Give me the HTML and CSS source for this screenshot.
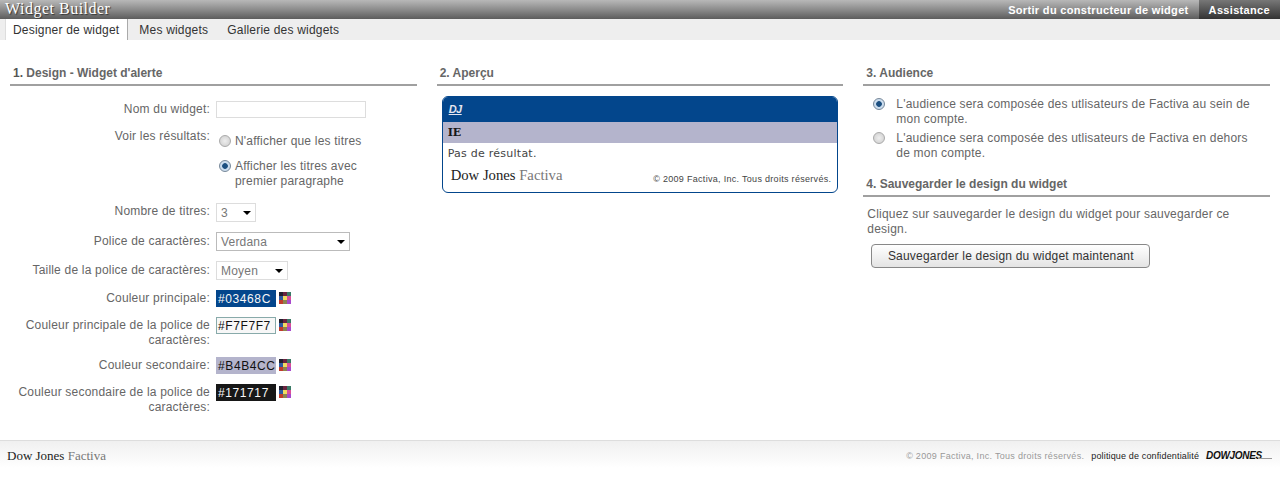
FILE: index.html
```html
<!DOCTYPE html>
<html lang="fr">
<head>
  <meta charset="UTF-8">
  <title>Widget Builder</title>
  <link rel="stylesheet" href="styles.css">
</head>
<body>
  <svg class="sprites" width="0" height="0">
    <symbol id="palette" viewBox="0 0 12 12">
      <rect x="0" y="0" width="4" height="4" fill="#20202e"/>
      <rect x="4" y="0" width="4" height="4" fill="#6a2440"/>
      <rect x="8" y="0" width="4" height="4" fill="#3a7a66"/>
      <rect x="0" y="4" width="4" height="4" fill="#2f5aa0"/>
      <rect x="4" y="4" width="4" height="4" fill="#f0dc60"/>
      <rect x="8" y="4" width="4" height="4" fill="#d84f98"/>
      <rect x="0" y="8" width="4" height="4" fill="#c23c2c"/>
      <rect x="4" y="8" width="4" height="4" fill="#8c8450"/>
      <rect x="8" y="8" width="4" height="4" fill="#a848cc"/>
    </symbol>
  </svg>

  <header class="topbar">
    <div class="brand">Widget Builder</div>
    <nav class="toplinks">
      <a href="#" class="exit">Sortir du constructeur de widget</a>
      <a href="#" class="help">Assistance</a>
    </nav>
  </header>

  <div class="tabs">
    <a href="#" class="tab active">Designer de widget</a>
    <a href="#" class="tab">Mes widgets</a>
    <a href="#" class="tab">Gallerie des widgets</a>
  </div>

  <main class="columns">
    <section class="col">
      <h2><b>1.</b> Design - Widget d'alerte</h2>
      <div class="form">
        <div class="row row-name">
          <label>Nom du widget:</label>
          <input type="text" class="name-input">
        </div>
        <div class="row row-results">
          <label>Voir les résultats:</label>
          <div class="choices">
            <div class="choice"><span class="radio"></span><span>N'afficher que les titres</span></div>
            <div class="choice"><span class="radio on"></span><span>Afficher les titres avec<br>premier paragraphe</span></div>
          </div>
        </div>
        <div class="row row-count">
          <label>Nombre de titres:</label>
          <div class="select s-count">3</div>
        </div>
        <div class="row row-font">
          <label>Police de caractères:</label>
          <div class="select s-font">Verdana</div>
        </div>
        <div class="row row-size">
          <label>Taille de la police de caractères:</label>
          <div class="select s-size">Moyen</div>
        </div>
        <div class="row row-color">
          <label>Couleur principale:</label>
          <div class="swatch c-main">#03468C</div>
          <svg class="palette"><use href="#palette"/></svg>
        </div>
        <div class="row row-color two">
          <label>Couleur principale de la police de caractères:</label>
          <div class="swatch c-main-text">#F7F7F7</div>
          <svg class="palette"><use href="#palette"/></svg>
        </div>
        <div class="row row-color">
          <label>Couleur secondaire:</label>
          <div class="swatch c-second">#B4B4CC</div>
          <svg class="palette"><use href="#palette"/></svg>
        </div>
        <div class="row row-color two">
          <label>Couleur secondaire de la police de caractères:</label>
          <div class="swatch c-second-text">#171717</div>
          <svg class="palette"><use href="#palette"/></svg>
        </div>
      </div>
    </section>

    <section class="col">
      <h2>2. Aperçu</h2>
      <div class="preview">
        <div class="preview-head"><span class="dj">DJ</span></div>
        <div class="preview-title">IE</div>
        <div class="preview-body">Pas de résultat.</div>
        <div class="preview-foot">
          <span class="logo logo-large">Dow Jones <i>Factiva</i></span>
          <span class="preview-copy">© 2009 Factiva, Inc. Tous droits réservés.</span>
        </div>
      </div>
    </section>

    <section class="col">
      <h2>3. Audience</h2>
      <div class="audience">
        <div class="aud-item"><span class="radio on"></span><span>L'audience sera composée des utlisateurs de Factiva au sein de mon compte.</span></div>
        <div class="aud-item"><span class="radio"></span><span>L'audience sera composée des utlisateurs de Factiva en dehors de mon compte.</span></div>
      </div>
      <h2 class="second">4. Sauvegarder le design du widget</h2>
      <p class="save-text">Cliquez sur sauvegarder le design du widget pour sauvegarder ce design.</p>
      <button class="save-btn">Sauvegarder le design du widget maintenant</button>
    </section>
  </main>

  <footer class="footer">
    <span class="logo">Dow Jones <i>Factiva</i></span>
    <div class="footer-right">
      <span class="copy">© 2009 Factiva, Inc. Tous droits réservés.</span>
      <a href="#" class="privacy">politique de confidentialité</a>
      <span class="dowjones">DOWJONES</span>
    </div>
  </footer>
</body>
</html>
```

FILE: styles.css
```css
body {
  margin: 0;
  padding: 0;
  background-color: #fff;
  font-family: "Liberation Sans", Arial, sans-serif;
  font-size: 12px;
  letter-spacing: 0.2px;
  color: #666;
}

a {
  text-decoration: none;
}

.sprites {
  position: absolute;
}

/* top bar */
.topbar {
  height: 19px;
  display: flex;
  justify-content: space-between;
  background: linear-gradient(#b8b8b8, #8c8c8c 50%, #5c5c5c);
}

.brand {
  padding-left: 5px;
  font-family: "Liberation Serif", serif;
  font-size: 16px;
  line-height: 18px;
  letter-spacing: 0.5px;
  color: #fff;
  text-shadow: 1px 1px 1px #333;
}

.toplinks {
  display: flex;
}

.toplinks a {
  font-size: 11px;
  font-weight: bold;
  line-height: 20px;
  letter-spacing: 0.33px;
  color: #fff;
}

.exit {
  padding-right: 10px;
}

.help {
  padding: 0 10px;
  background: linear-gradient(#777, #333);
}

/* tabs */
.tabs {
  height: 21px;
  display: flex;
  padding-left: 5px;
  background-color: #eee;
}

.tab {
  padding: 0 8px 0 11px;
  line-height: 22px;
  color: #333;
}

.tab.active {
  padding: 0 8px 0 7px;
  background-color: #fff;
  border-right: 1px solid #aaa;
  border-left: 1px solid #ddd;
}

/* columns */
.columns {
  height: 400px;
  display: grid;
  grid-template-columns: 1fr 1fr 1fr;
  column-gap: 20px;
  padding: 0 10px;
}

h2 {
  margin: 26px 0 0;
  padding: 0 0 3px 3px;
  font-size: 12px;
  line-height: 15px;
  letter-spacing: 0;
  color: #666;
  border-bottom: 2px solid #a0a0a0;
}

h2 b {
  color: #555;
}

h2.second {
  margin-top: 16px;
}

/* left form */
.form {
  padding-top: 15px;
}

.row {
  display: grid;
  grid-template-columns: 200px auto;
  justify-content: start;
  align-items: start;
  column-gap: 6px;
  line-height: 15px;
  margin-bottom: 10px;
}

.row label {
  text-align: right;
}

.row-name {
  margin-bottom: 11px;
}

.row-name label,
.row-count label,
.row-color label {
  padding-top: 1px;
}

.row-font label,
.row-size label {
  padding-top: 2px;
}

.row-results {
  margin-bottom: 14px;
}

.name-input {
  box-sizing: border-box;
  width: 150px;
  height: 17px;
  padding: 0;
  margin: 0;
  border: 1px solid #ddd;
}

.choices {
  padding-top: 5px;
  padding-left: 3px;
}

.choice {
  display: flex;
  gap: 4px;
  margin-bottom: 10px;
}

.choice:last-child {
  margin-bottom: 0;
}

.radio {
  flex: none;
  width: 10px;
  height: 10px;
  margin-top: 1px;
  border: 1px solid #aaa;
  border-radius: 50%;
  background: radial-gradient(#eee, #ccc);
}

.radio.on {
  border-color: #789;
  background: radial-gradient(#1c4f80 35%, #cde 45%);
}

.select {
  position: relative;
  box-sizing: border-box;
  height: 19px;
  padding-left: 4px;
  border: 1px solid #ddd;
  line-height: 19px;
  color: #777;
}

.select::after {
  content: "";
  position: absolute;
  right: 4px;
  top: 7px;
  border: 4px solid transparent;
  border-top-color: #000;
  border-bottom-width: 0;
}

.s-count {
  width: 40px;
}

.s-font {
  width: 134px;
  border-color: #bbb;
}

.s-size {
  width: 72px;
}

.row-color {
  grid-template-columns: 216px 60px 12px;
  column-gap: 0;
  margin-left: -10px;
}

.row-color label {
  padding-left: 4px;
  margin-right: 6px;
}

.row-color .palette {
  width: 12px;
  height: 12px;
  margin: 2px 0 0 3px;
}

.row-color.two:nth-child(7) {
  margin-bottom: 9px;
}

.swatch {
  box-sizing: border-box;
  width: 60px;
  height: 17px;
  padding-left: 1px;
  border: 1px solid #ccc;
  line-height: 16px;
  letter-spacing: 0.6px;
  color: #111;
}

.c-main {
  background-color: #03468c;
  border-color: #03468c;
  color: #f7f7f7;
}

.c-main-text {
  background-color: #f7f7f7;
  border-color: #8aa;
}

.c-second {
  background-color: #b4b4cc;
  border-color: #b4b4cc;
}

.c-second-text {
  background-color: #171717;
  border-color: #171717;
  color: #f7f7f7;
}

/* preview */
.preview {
  margin: 10px 5px 0;
  border: 1px solid #03468c;
  border-radius: 6px;
  overflow: hidden;
}

.preview-head {
  height: 25px;
  padding-left: 6px;
  background-color: #03468c;
}

.dj {
  font-size: 11px;
  font-weight: bold;
  font-style: italic;
  line-height: 25px;
  letter-spacing: -0.5px;
  color: #e6e6f0;
  text-decoration: underline;
}

.preview-title {
  height: 21px;
  padding-left: 5px;
  background-color: #b4b4cc;
  font-family: "DejaVu Serif", serif;
  font-size: 11px;
  font-weight: bold;
  line-height: 21px;
  color: #171717;
  letter-spacing: 0;
}

.preview-body {
  padding: 3px 5px 0;
  font-family: "DejaVu Sans", sans-serif;
  font-size: 11px;
  line-height: 15px;
  letter-spacing: 0.25px;
  color: #444;
}

.preview-foot {
  display: flex;
  justify-content: space-between;
  align-items: flex-end;
  padding: 6px 6px 9px 8px;
}

.preview-copy {
  margin-bottom: -2px;
  font-size: 9px;
  line-height: 12px;
  letter-spacing: 0.3px;
  color: #444;
}

.logo {
  font-family: "Liberation Serif", serif;
  font-size: 13px;
  line-height: 16px;
  letter-spacing: 0;
  color: #222;
}

.logo-large {
  font-size: 14.7px;
}

.logo i {
  font-style: normal;
  color: #777;
}

/* audience */
.audience {
  padding: 11px 10px 0 10px;
}

.aud-item {
  display: flex;
  gap: 11px;
  line-height: 15px;
  margin-bottom: 4px;
}

.save-text {
  margin: 10px 0 0;
  padding: 0 20px 0 4px;
  line-height: 15px;
}

.save-btn {
  display: block;
  box-sizing: border-box;
  width: 279px;
  height: 24px;
  margin: 7px 0 0 8px;
  padding: 0;
  font-family: "Liberation Sans", Arial, sans-serif;
  font-size: 12px;
  letter-spacing: 0.2px;
  color: #333;
  border: 1px solid #888;
  border-radius: 4px;
  background: linear-gradient(#fff, #e4e4e4);
}

/* footer */
.footer {
  height: 25px;
  display: flex;
  justify-content: space-between;
  align-items: center;
  padding: 2px 8px 0 7px;
  border-top: 1px solid #ddd;
  background: linear-gradient(#f0f0f0, #fff);
}

.footer-right {
  display: flex;
  align-items: center;
  gap: 7px;
}

.copy {
  font-size: 9px;
  letter-spacing: 0.3px;
  color: #999;
}

.privacy {
  font-size: 9px;
  letter-spacing: 0.15px;
  color: #222;
}

.dowjones {
  position: relative;
  padding-right: 10px;
  font-size: 10px;
  font-weight: bold;
  font-style: italic;
  letter-spacing: -0.3px;
  color: #111;
}

.dowjones::after {
  content: "";
  position: absolute;
  right: 0;
  bottom: 2px;
  width: 14px;
  height: 1px;
  background-color: #999;
}
```
